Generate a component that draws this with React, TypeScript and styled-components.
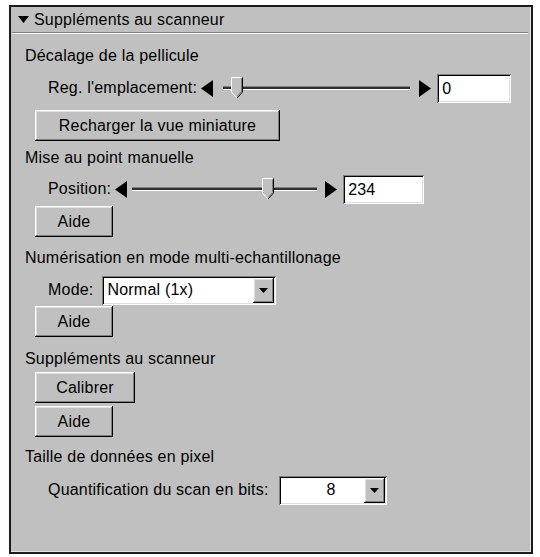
import styled, { createGlobalStyle } from "styled-components";

const GlobalStyle = createGlobalStyle`
  body {
    margin: 0;
    background: #ffffff;
    font-family: "Liberation Sans", Arial, sans-serif;
    font-size: 16px;
    letter-spacing: 0.2px;
    color: #000000;
  }
`;

const raised = `
  box-shadow: inset -1px -1px #000000, inset 1px 1px #ffffff,
    inset -2px -2px #808080, inset 2px 2px #dfdfdf;
`;

const sunken = `
  box-shadow: inset 1px 1px #808080, inset -1px -1px #ffffff,
    inset 2px 2px #000000, inset -2px -2px #dfdfdf;
`;

const Page = styled.div`
  padding: 5px 0 0 9px;
`;

const Frame = styled.div`
  width: 524px;
  height: 549px;
  box-sizing: border-box;
  background: #c0c0c0;
  border: 2px solid #1c1c1c;
  box-shadow: inset -1px -1px #e2e2e2;
  display: flex;
  flex-direction: column;
`;

const Header = styled.div`
  height: 25px;
  display: flex;
  align-items: center;
  gap: 5px;
  padding-left: 7px;
`;

const Separator = styled.div`
  margin: 0 3px 0 1px;
  height: 1px;
  background: #808080;
  border-bottom: 1px solid #ffffff;
`;

const Content = styled.div`
  display: flex;
  flex-direction: column;
  padding: 10px 0 0 14px;
`;

const Title = styled.div<{ $mt?: number }>`
  height: 24px;
  display: flex;
  align-items: center;
  margin-top: ${(p) => p.$mt ?? 0}px;
`;

const Row = styled.div<{ $mt: number }>`
  height: 30px;
  display: flex;
  align-items: center;
  padding-left: 23px;
  margin-top: ${(p) => p.$mt}px;
`;

const Label = styled.span<{ $gap: number }>`
  margin-right: ${(p) => p.$gap}px;
`;

const ButtonRow = styled.div<{ $mt: number }>`
  height: 31px;
  display: flex;
  align-items: center;
  padding-left: 10px;
  margin-top: ${(p) => p.$mt}px;
`;

const Button = styled.button<{ $w: number }>`
  width: ${(p) => p.$w}px;
  height: 31px;
  border: none;
  background: #c0c0c0;
  font-family: inherit;
  font-size: 16px;
  letter-spacing: 0.2px;
  color: #000000;
  padding: 0;
  ${raised}
`;

const Arrow = styled.svg<{ $ml: number; $mr: number }>`
  margin-left: ${(p) => p.$ml}px;
  margin-right: ${(p) => p.$mr}px;
  flex: none;
`;

const Track = styled.div<{ $w: number }>`
  position: relative;
  width: ${(p) => p.$w}px;
  height: 24px;
  display: flex;
  align-items: center;
`;

const TrackLine = styled.div`
  width: 100%;
  height: 2px;
  background: #303030;
  border-top: 1px solid #808080;
  border-bottom: 1px solid #ffffff;
`;

const Thumb = styled.svg`
  position: absolute;
  top: 1px;
`;

const Field = styled.div<{ $w: number }>`
  width: ${(p) => p.$w}px;
  height: 29px;
  box-sizing: border-box;
  background: #ffffff;
  display: flex;
  align-items: center;
  padding: 2px 2px 0 5px;
  ${sunken}
`;

const Select = styled.div<{ $w: number }>`
  width: ${(p) => p.$w}px;
  height: 29px;
  box-sizing: border-box;
  background: #ffffff;
  display: flex;
  align-items: center;
  padding: 2px;
  ${sunken}
`;

const SelectText = styled.span<{ $right?: boolean }>`
  flex: 1;
  text-align: ${(p) => (p.$right ? "right" : "left")};
  padding: ${(p) => (p.$right ? "0 28px 0 0" : "0 0 0 3px")};
`;

const DropButton = styled.div`
  width: 21px;
  height: 25px;
  background: #c0c0c0;
  display: flex;
  align-items: center;
  justify-content: center;
  ${raised}
`;

const LeftArrow = ({ ml, mr }: { ml: number; mr: number }) => (
  <Arrow $ml={ml} $mr={mr} width="12" height="17" viewBox="0 0 12 17">
    <polygon points="12,0 12,17 0,8.5" fill="#000" />
  </Arrow>
);

const RightArrow = ({ ml, mr }: { ml: number; mr: number }) => (
  <Arrow $ml={ml} $mr={mr} width="12" height="17" viewBox="0 0 12 17">
    <polygon points="0,0 0,17 12,8.5" fill="#000" />
  </Arrow>
);

const Slider = ({ width, pos }: { width: number; pos: number }) => (
  <Track $w={width}>
    <TrackLine />
    <Thumb style={{ left: pos }} width="12" height="22" viewBox="0 0 12 22">
      <polygon points="0.5,0.5 11.5,0.5 11.5,15 6,21 0.5,15" fill="#c0c0c0" />
      <polyline points="0.5,15 0.5,0.5 11,0.5" fill="none" stroke="#fff" />
      <polyline points="11.5,0.5 11.5,15 6,21" fill="none" stroke="#000" />
      <polyline points="10.5,1.5 10.5,14.5 6,19.5" fill="none" stroke="#808080" />
      <polyline points="0.5,15 6,21" fill="none" stroke="#fff" />
    </Thumb>
  </Track>
);

const Drop = () => (
  <DropButton>
    <svg width="9" height="5" viewBox="0 0 9 5">
      <polygon points="0,0 9,0 4.5,5" fill="#000" />
    </svg>
  </DropButton>
);

export default function App() {
  return (
    <>
      <GlobalStyle />
      <Page>
        <Frame>
          <Header>
            <svg width="11" height="7" viewBox="0 0 11 7">
              <polygon points="0,0 11,0 5.5,7" fill="#000" />
            </svg>
            <span>Suppléments au scanneur</span>
          </Header>
          <Separator />
          <Content>
            <Title>Décalage de la pellicule</Title>
            <Row $mt={5}>
              <Label $gap={4}>Reg. l'emplacement:</Label>
              <LeftArrow ml={0} mr={10} />
              <Slider width={187} pos={8} />
              <RightArrow ml={9} mr={6} />
              <Field $w={74}>0</Field>
            </Row>
            <ButtonRow $mt={7}>
              <Button $w={245}>Recharger la vue miniature</Button>
            </ButtonRow>

            <Title $mt={5}>Mise au point manuelle</Title>
            <Row $mt={4}>
              <Label $gap={4}>Position:</Label>
              <LeftArrow ml={0} mr={5} />
              <Slider width={185} pos={130} />
              <RightArrow ml={8} mr={6} />
              <Field $w={81}>234</Field>
            </Row>
            <ButtonRow $mt={2}>
              <Button $w={78}>Aide</Button>
            </ButtonRow>

            <Title $mt={9}>Numérisation en mode multi-echantillonage</Title>
            <Row $mt={5}>
              <Label $gap={9}>Mode:</Label>
              <Select $w={174}>
                <SelectText>Normal (1x)</SelectText>
                <Drop />
              </Select>
            </Row>
            <ButtonRow $mt={1}>
              <Button $w={78}>Aide</Button>
            </ButtonRow>

            <Title $mt={10}>Suppléments au scanneur</Title>
            <ButtonRow $mt={1}>
              <Button $w={100}>Calibrer</Button>
            </ButtonRow>
            <ButtonRow $mt={3}>
              <Button $w={78}>Aide</Button>
            </ButtonRow>

            <Title $mt={8}>Taille de données en pixel</Title>
            <Row $mt={6}>
              <Label $gap={10}>Quantification du scan en bits:</Label>
              <Select $w={108}>
                <SelectText $right>8</SelectText>
                <Drop />
              </Select>
            </Row>
          </Content>
        </Frame>
      </Page>
    </>
  );
}
